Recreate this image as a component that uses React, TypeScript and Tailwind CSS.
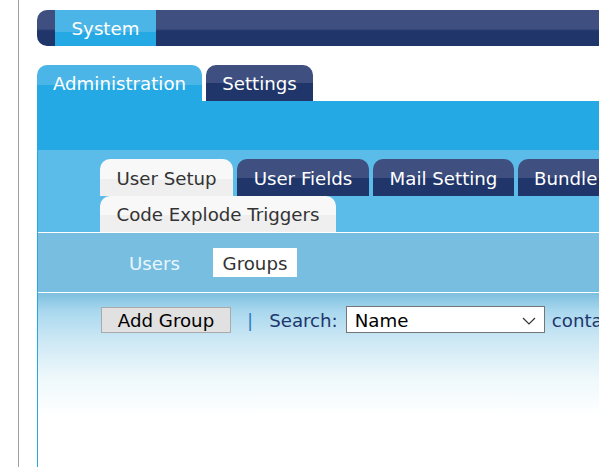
const font = "font-['DejaVu_Sans',Verdana,sans-serif]";

const navyTab =
  "bg-[linear-gradient(#3f5080_0,#3f5080_50%,#20366b_50%,#20366b_100%)] text-white";
const whiteTab =
  "bg-[linear-gradient(#f8f8f8_0,#f8f8f8_54%,#efefef_54%,#efefef_100%)] text-[#333333]";

function Tab({ label, className }: { label: string; className: string }) {
  return (
    <div
      className={`flex shrink-0 items-center justify-center whitespace-nowrap rounded-t-[10px] pt-[2px] ${className}`}
    >
      {label}
    </div>
  );
}

export default function App() {
  return (
    <div className={`h-[467px] w-[599px] overflow-hidden bg-white text-[18.2px] ${font}`}>
      <div className="ml-[18px] h-full border-l border-[#a0a0a0] pl-[18px] pt-[10px]">
        <div className="flex h-[36px] overflow-hidden rounded-l-[10px] bg-[linear-gradient(#3f5080_0,#3f5080_53%,#3a4a7a_53%,#20366b_58%,#20366b_100%)] pl-[18px]">
          <div className="flex w-[101px] items-center justify-center bg-[linear-gradient(#4ab5e6_0,#4ab5e6_60%,#25a9e4_60%,#25a9e4_100%)] pt-[2px] text-white">
            System
          </div>
        </div>

        <div className="mt-[19px] flex gap-[4px]">
          <Tab
            label="Administration"
            className="h-[36px] w-[165px] bg-[linear-gradient(#4ab5e6_0,#4ab5e6_55%,#25a9e4_55%,#25a9e4_100%)] text-white"
          />
          <Tab label="Settings" className={`h-[36px] w-[107px] ${navyTab}`} />
        </div>

        <div className="h-[49px] bg-[#25a9e4]" />

        <div className="h-[420px] border-l border-[#25a9e4]">
          <div className="bg-[#5bbbe9] pl-[62px] pt-[9px]">
            <div className="flex gap-[4px]">
              <Tab label="User Setup" className={`h-[37px] w-[133px] ${whiteTab}`} />
              <Tab label="User Fields" className={`h-[37px] w-[132px] ${navyTab}`} />
              <Tab label="Mail Setting" className={`h-[37px] w-[141px] ${navyTab}`} />
              <Tab label="Bundle" className={`h-[37px] w-[100px] justify-start pl-[16px] ${navyTab}`} />
            </div>
            <div className="flex">
              <Tab label="Code Explode Triggers" className={`h-[36px] w-[236px] ${whiteTab}`} />
            </div>
          </div>

          <div className="flex h-[61px] items-center border-y border-white bg-[#78bee0] pl-[62px]">
            <div className="w-[113px] pl-[29px] pt-[2px] text-[#e8f6fd]">Users</div>
            <div className="flex h-[29px] w-[84px] items-center justify-center bg-white pt-[2px] text-[#333333]">
              Groups
            </div>
          </div>

          <div className="flex h-[130px] items-start whitespace-nowrap bg-[linear-gradient(#7dbfdf_0,#a9d8ee_14%,#cbe7f4_35%,#eef8fb_65%,#ffffff_95%)] pl-[63px] pt-[14px]">
            <button className="flex h-[26px] w-[130px] shrink-0 items-center justify-center border border-[#aaaaaa] bg-[#e1e1e1] pt-[1px] text-black">
              Add Group
            </button>
            <span className="ml-[16px] flex h-[26px] items-center pt-[2px] text-[#2b7fc4]">|</span>
            <span className="ml-[16px] flex h-[26px] items-center pt-[2px] text-[#20366b]">Search:</span>
            <div className="ml-[8px] mt-[-1px] flex h-[27px] w-[199px] shrink-0 items-center justify-between border border-[#767676] bg-white pl-[8px] pr-[8px] pt-[2px] text-black">
              Name
              <svg width="14" height="8" viewBox="0 0 14 8" fill="none" stroke="#333333" strokeWidth="1.2">
                <path d="M1 1l6 6 6-6" />
              </svg>
            </div>
            <span className="ml-[7px] flex h-[26px] items-center pt-[2px] text-[#20366b]">contains</span>
          </div>
        </div>
      </div>
    </div>
  );
}
